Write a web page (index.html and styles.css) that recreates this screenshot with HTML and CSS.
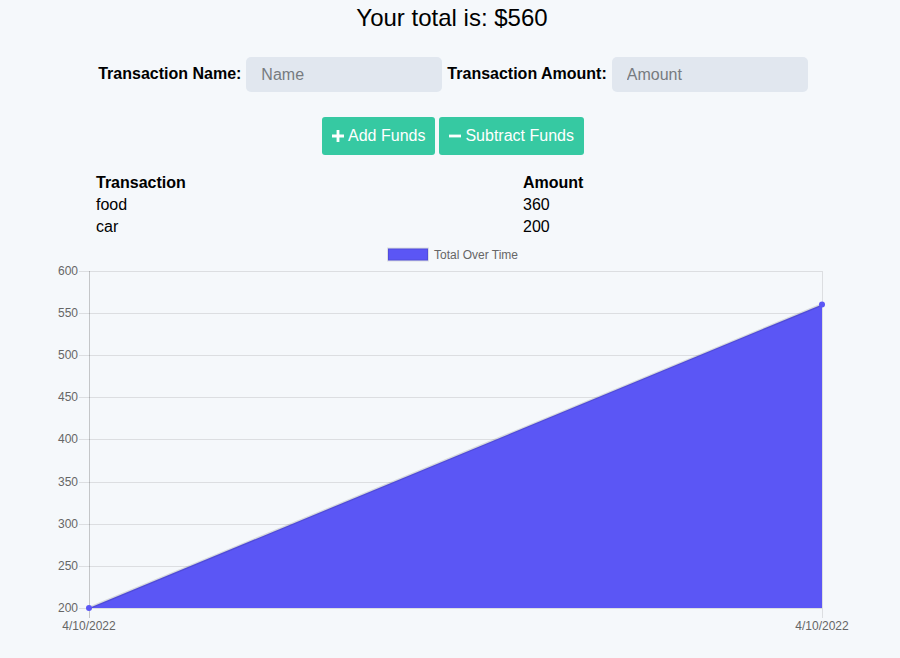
FILE: index.html
```html
<!DOCTYPE html>
<html>
<head>
<meta charset="utf-8">
<title>Budget Tracker</title>
<link rel="stylesheet" href="styles.css">
</head>
<body>
<h1 class="total">Your total is: $<span>560</span></h1>
<form class="form-row">
  <label class="field-label" for="t-name">Transaction Name:</label>
  <input class="field-input" id="t-name" type="text" placeholder="Name">
  <label class="field-label" for="t-amount">Transaction Amount:</label>
  <input class="field-input" id="t-amount" type="number" placeholder="Amount">
</form>
<div class="buttons">
  <button class="btn" type="button">
    <svg class="icon" width="12" height="12" viewBox="0 0 12 12"><path d="M4.6 0h2.8v4.6H12v2.8H7.4V12H4.6V7.4H0V4.6h4.6z" fill="#fff"/></svg>
    Add Funds
  </button>
  <button class="btn" type="button">
    <svg class="icon" width="12" height="12" viewBox="0 0 12 12"><path d="M0 4.6h12v2.8H0z" fill="#fff"/></svg>
    Subtract Funds
  </button>
</div>
<div class="table">
  <div class="th">Transaction</div><div class="th">Amount</div>
  <div class="td">food</div><div class="td">360</div>
  <div class="td">car</div><div class="td">200</div>
</div>
<svg class="chart" width="900" height="410" viewBox="0 240 900 410">
  <!-- legend -->
  <rect x="388" y="248.5" width="40" height="12" fill="#5b56f5" stroke="rgba(0,0,0,0.1)" stroke-width="2"/>
  <text x="434" y="258.5" class="legend-text">Total Over Time</text>
  <!-- horizontal grid lines -->
  <g stroke="rgba(0,0,0,0.1)" stroke-width="1">
    <line x1="79" y1="271.5" x2="822" y2="271.5"/>
    <line x1="79" y1="313.5" x2="822" y2="313.5"/>
    <line x1="79" y1="355.5" x2="822" y2="355.5"/>
    <line x1="79" y1="397.5" x2="822" y2="397.5"/>
    <line x1="79" y1="439.5" x2="822" y2="439.5"/>
    <line x1="79" y1="482.5" x2="822" y2="482.5"/>
    <line x1="79" y1="524.5" x2="822" y2="524.5"/>
    <line x1="79" y1="566.5" x2="822" y2="566.5"/>
    <line x1="79" y1="608.5" x2="822" y2="608.5"/>
    <line x1="822.5" y1="271" x2="822.5" y2="618"/>
  </g>
  <line x1="89.5" y1="271" x2="89.5" y2="618" stroke="rgba(0,0,0,0.2)" stroke-width="1"/>
  <!-- area -->
  <polygon points="89,608 822,304.5 822,608" fill="#5b56f5"/>
  <line x1="89" y1="608" x2="822" y2="304.5" stroke="rgba(0,0,0,0.12)" stroke-width="2.5"/>
  <circle cx="89" cy="608" r="3" fill="#5b56f5"/>
  <circle cx="822" cy="304.5" r="3" fill="#5b56f5"/>
  <!-- y labels -->
  <g class="tick-text" text-anchor="end">
    <text x="78" y="275">600</text>
    <text x="78" y="317">550</text>
    <text x="78" y="359">500</text>
    <text x="78" y="401">450</text>
    <text x="78" y="443">400</text>
    <text x="78" y="486">350</text>
    <text x="78" y="528">300</text>
    <text x="78" y="570">250</text>
    <text x="78" y="612">200</text>
  </g>
  <g class="tick-text" text-anchor="middle">
    <text x="89" y="630">4/10/2022</text>
    <text x="822" y="630">4/10/2022</text>
  </g>
</svg>
</body>
</html>
```
FILE: styles.css
```css
html, body {
  margin: 0;
  padding: 0;
  background: #f5f8fb;
  font-family: "Liberation Sans", Arial, Helvetica, sans-serif;
  color: #000;
}
body {
  width: 900px;
  height: 658px;
  overflow: hidden;
}
.total {
  margin: 0;
  padding-top: 4px;
  font-size: 24px;
  line-height: 28px;
  font-weight: normal;
  text-align: center;
  padding-left: 4px;
}
.form-row {
  display: flex;
  justify-content: center;
  align-items: center;
  gap: 5px;
  margin-top: 25px;
  padding-left: 6px;
  height: 35px;
}
.field-label {
  font-weight: bold;
  font-size: 16px;
  position: relative;
  top: -1px;
}
.field-input {
  box-sizing: border-box;
  width: 196px;
  height: 35px;
  border: none;
  border-radius: 5px;
  background: #e1e7ef;
  padding: 0 15px;
  font-family: inherit;
  font-size: 16px;
  outline: none;
  margin-right: 0;
}
.field-input::placeholder {
  color: #777b80;
}
.field-input::-webkit-outer-spin-button,
.field-input::-webkit-inner-spin-button {
  -webkit-appearance: none;
  margin: 0;
}
.field-input[type=number] {
  -moz-appearance: textfield;
}
.buttons {
  display: flex;
  justify-content: center;
  gap: 4px;
  margin-top: 25px;
  padding-left: 6px;
}
.btn {
  display: flex;
  align-items: center;
  gap: 4px;
  height: 38px;
  padding: 0 10px;
  border: none;
  border-radius: 3px;
  background: #36c9a2;
  color: #fff;
  font-family: inherit;
  font-size: 16px;
}
.icon {
  display: block;
}
.table {
  display: grid;
  grid-template-columns: 427px auto;
  margin: 17px 0 0 96px;
  font-size: 16px;
  line-height: 22px;
}
.th {
  font-weight: bold;
}
.chart {
  display: block;
  margin-top: 2px;
}
.legend-text {
  font-family: "Liberation Sans", Arial, sans-serif;
  font-size: 12px;
  fill: #666;
}
.tick-text {
  font-family: "Liberation Sans", Arial, sans-serif;
  font-size: 12px;
  fill: #666;
}
```
